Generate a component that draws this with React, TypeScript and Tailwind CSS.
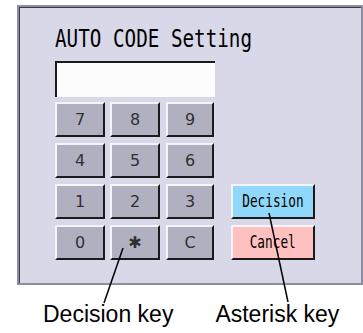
import React from "react";

const keyCls =
  "flex items-center justify-center h-[35px] bg-[#b0b0c0] border-t-2 border-l-2 border-t-[#f4f4fa] border-l-[#f4f4fa] border-r-2 border-b-2 border-r-[#1a1a1a] border-b-[#1a1a1a] text-[16px] text-[#303030] font-['DejaVu_Sans',sans-serif]";

function Key({ label, w }: { label: string; w: string }) {
  return (
    <div className={`${keyCls} ${w}`}>
      <span>{label}</span>
    </div>
  );
}

const btnCls =
  "w-[84px] h-[35px] flex items-center justify-center border-t-2 border-l-2 border-t-[#f4f4fa] border-l-[#f4f4fa] border-r-2 border-b-2 border-r-[#1a1a1a] border-b-[#1a1a1a] font-['DejaVu_Sans_Mono',monospace] text-[17px] text-black";

export default function App() {
  const rows = [
    ["7", "8", "9"],
    ["4", "5", "6"],
    ["1", "2", "3"],
    ["0", "✱", "C"],
  ];
  return (
    <div className="relative w-[363px] h-[333px] bg-white overflow-hidden">
      <div className="ml-[17px] mt-[5px] w-[346px] h-[280px] bg-[#d8d8e8] border-2 border-[#8e8ea2] shadow-[inset_1px_1px_0_#3a3a44] flex flex-col pl-[36px] pt-[16px]">
        <div className="h-[30px] flex items-center font-['DejaVu_Sans_Mono',monospace] text-[25px] leading-none text-black whitespace-nowrap">
          <span className="inline-block origin-left scale-x-[0.77]">AUTO CODE Setting</span>
        </div>
        <div className="flex mt-[8px]">
          <div className="flex flex-col">
            <div className="w-[160px] h-[36px] bg-[#fcfcfc] border-t-2 border-l-2 border-[#1a1a1a]" />
            <div className="flex flex-col gap-[6px] mt-[5px]">
              {rows.map((r, i) => (
                <div key={i} className="flex">
                  <Key label={r[0]} w="w-[50px]" />
                  <div className="w-[5px]" />
                  <Key label={r[1]} w="w-[50px]" />
                  <div className="w-[6px]" />
                  <Key label={r[2]} w="w-[48px]" />
                </div>
              ))}
            </div>
          </div>
          <div className="flex flex-col justify-end gap-[6px] ml-[16px]">
            <div className={`${btnCls} bg-[#90d8fa]`}>
              <span className="inline-block scale-x-[0.75]">Decision</span>
            </div>
            <div className={`${btnCls} bg-[#ffc0c0]`}>
              <span className="inline-block scale-x-[0.75]">Cancel</span>
            </div>
          </div>
        </div>
      </div>
      <div className="flex mt-[16px] font-['Liberation_Sans',Arial,sans-serif] text-[23px] leading-[26px] text-black">
        <span className="ml-[43px]">Decision key</span>
        <span className="ml-[42px]">Asterisk key</span>
      </div>
      <svg className="absolute left-0 top-0 pointer-events-none" width="363" height="333">
        <line x1="123" y1="248" x2="104" y2="303" stroke="#000" strokeWidth="1.5" />
        <line x1="269" y1="213" x2="288" y2="302" stroke="#000" strokeWidth="1.5" />
      </svg>
    </div>
  );
}
